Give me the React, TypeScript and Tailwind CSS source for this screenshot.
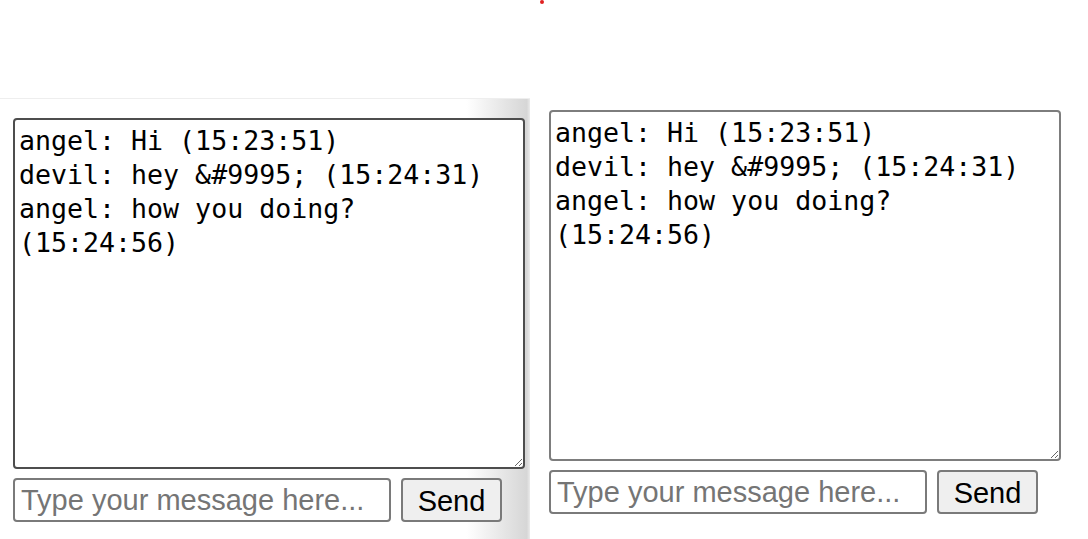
import React from "react";

const msgs = "angel: Hi (15:23:51)\ndevil: hey &#9995; (15:24:31)\nangel: how you doing? (15:24:56)";

function Chat({ dark }: { dark: boolean }) {
  return (
    <div className="flex flex-col gap-[9px]">
      <textarea
        readOnly
        value={msgs}
        className={
          "w-[512px] h-[351px] rounded-[4px] bg-white pl-[4px] pr-[5px] py-[4px] text-[26.6px] leading-[34px] text-black outline-none " +
          (dark ? "border-2 border-[#4d4d4d]" : "border-2 border-[#7d7d7d]")
        }
        style={{ fontFamily: '"DejaVu Sans Mono", monospace', resize: "both" }}
      />
      <div className="flex gap-[10px]" style={{ fontFamily: '"Liberation Sans", Arial, sans-serif' }}>
        <input
          placeholder="Type your message here..."
          className="w-[378px] h-[44px] rounded-[4px] border-2 border-[#7a7a7a] bg-white px-[6px] text-[29px] text-black placeholder:text-[#757575] outline-none"
        />
        <button className="w-[101px] h-[44px] rounded-[4px] border-2 border-[#7a7a7a] bg-[#efefef] text-[29px] text-black">
          Send
        </button>
      </div>
    </div>
  );
}

export default function App() {
  return (
    <div className="relative w-[1088px] h-[539px] overflow-hidden bg-white">
      <div className="absolute left-[540px] top-0 w-[4px] h-[4px] rounded-full bg-[#e02020]" />
      <div className="flex h-full">
        <div className="mt-[98px] w-[530px] h-[441px] border-t border-[#eeeeee] bg-[linear-gradient(to_right,#ffffff_88%,#d6d6d6_99.4%,#ebebeb_100%)] pl-[13px] pt-[19px]">
          <Chat dark />
        </div>
        <div className="pl-[19px] pt-[110px]">
          <Chat dark={false} />
        </div>
      </div>
    </div>
  );
}
